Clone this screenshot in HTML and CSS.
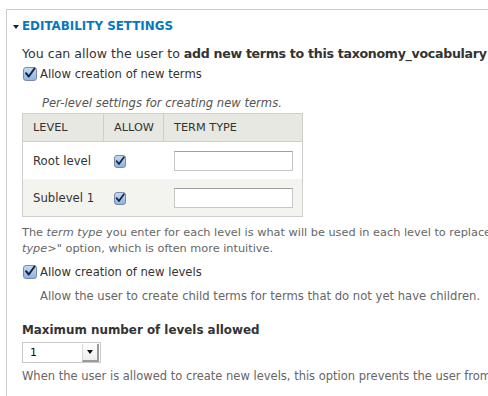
FILE: index.html
```html
<!DOCTYPE html>
<html lang="en">
<head>
  <meta charset="UTF-8">
  <title>Editability settings</title>
  <link rel="stylesheet" href="styles.css">
</head>
<body>
  <div class="fieldset">
    <div class="legend">
      <span class="arrow"></span>
      <span class="legend-text">EDITABILITY SETTINGS</span>
    </div>

    <div class="content">
      <p class="intro">You can allow the user to <strong>add new terms to this taxonomy_vocabulary</strong> using this form.</p>

      <div class="check-row">
        <span class="checkbox"><svg viewBox="0 0 14 14"><path d="M3 7.2 L5.8 10.5 L11.5 2.5" /></svg></span>
        <span>Allow creation of new terms</span>
      </div>

      <div class="caption">Per-level settings for creating new terms.</div>
      <table class="levels">
        <colgroup>
          <col class="col-level">
          <col class="col-allow">
          <col class="col-type">
        </colgroup>
        <thead>
          <tr>
            <th>LEVEL</th>
            <th>ALLOW</th>
            <th>TERM TYPE</th>
          </tr>
        </thead>
        <tbody>
          <tr>
            <td>Root level</td>
            <td><span class="checkbox small"><svg viewBox="0 0 14 14"><path d="M3 7.2 L5.8 10.5 L11.5 2.5" /></svg></span></td>
            <td><span class="text-input"></span></td>
          </tr>
          <tr class="even">
            <td>Sublevel 1</td>
            <td><span class="checkbox small"><svg viewBox="0 0 14 14"><path d="M3 7.2 L5.8 10.5 L11.5 2.5" /></svg></span></td>
            <td><span class="text-input"></span></td>
          </tr>
        </tbody>
      </table>

      <p class="description">The <em>term type</em> you enter for each level is what will be used in each level to replace the "Add &lt;term<br><em>type</em>&gt;" option, which is often more intuitive.</p>

      <div class="check-row">
        <span class="checkbox"><svg viewBox="0 0 14 14"><path d="M3 7.2 L5.8 10.5 L11.5 2.5" /></svg></span>
        <span>Allow creation of new levels</span>
      </div>
      <p class="description indent">Allow the user to create child terms for terms that do not yet have children.</p>

      <label class="field-label">Maximum number of levels allowed</label>
      <div class="select">
        <span class="select-value">1</span>
        <span class="select-button"><span class="select-arrow"></span></span>
      </div>
      <p class="description last">When the user is allowed to create new levels, this option prevents the user from creating too many levels.</p>
    </div>
  </div>
</body>
</html>
```

FILE: styles.css
```css
html, body {
  margin: 0;
  padding: 0;
  background: #fff;
  overflow: hidden;
}

body {
  font-family: "DejaVu Sans", Verdana, sans-serif;
  font-size: 11.7px;
  color: #333;
}

.fieldset {
  margin: 9px 0 0 6px;
  width: 700px;
  height: 400px;
  border-top: 1px solid #ccc;
  border-left: 1px solid #ccc;
}

.legend {
  display: flex;
  align-items: center;
  height: 14px;
  margin-top: 9px;
  padding-left: 6px;
}

.arrow {
  width: 0;
  height: 0;
  border-left: 3px solid transparent;
  border-right: 3px solid transparent;
  border-top: 4px solid #222;
  margin-right: 3px;
  margin-top: 1px;
}

.legend-text {
  color: #0678be;
  font-weight: bold;
  font-size: 11.9px;
  white-space: nowrap;
}

.content {
  padding-left: 15px;
  white-space: nowrap;
}

.intro {
  margin: 13px 0 0;
  font-size: 12.6px;
  line-height: 16px;
}

.intro strong {
  letter-spacing: -0.3px;
}

.check-row {
  display: flex;
  align-items: center;
  height: 16px;
  margin-top: 4px;
  font-size: 11.6px;
}

.checkbox {
  display: inline-block;
  box-sizing: border-box;
  width: 14px;
  height: 14px;
  margin-left: 1px;
  margin-right: 3px;
  border: 1px solid #7a8aa6;
  border-radius: 3px;
  background: linear-gradient(#c4d8f2, #8fb4e4);
}

.checkbox svg {
  display: block;
  width: 14px;
  height: 14px;
  margin: -2px 0 0 -1px;
}

.checkbox path {
  fill: none;
  stroke: #142440;
  stroke-width: 2;
  stroke-linecap: round;
  stroke-linejoin: round;
}

.checkbox.small {
  width: 12px;
  height: 13px;
}

.checkbox.small svg {
  width: 12px;
  height: 12px;
  margin: -1px 0 0 -1px;
}

.caption {
  margin-top: 14px;
  padding-left: 20px;
  font-style: italic;
  color: #555;
  font-size: 11.6px;
  line-height: 15px;
}

.levels {
  margin-top: 2px;
  border-collapse: collapse;
  table-layout: fixed;
  width: 280px;
  border: 1px solid #cfcfc9;
}

.col-level { width: 81px; }
.col-allow { width: 60px; }
.col-type { width: 139px; }

.levels th {
  background: #e8e8e3;
  font-weight: normal;
  text-align: left;
  height: 27px;
  padding: 0 0 0 10px;
  border-bottom: 1px solid #cfcfc9;
  font-size: 11.3px;
}

.levels th + th {
  border-left: 1px solid #cfcfc9;
}

.levels td {
  height: 37px;
  padding: 0 0 0 10px;
  font-size: 11.7px;
}

.levels tr.even td {
  background: #f3f4ef;
}

.levels td .checkbox {
  vertical-align: middle;
  margin-left: 0;
}

.text-input {
  display: block;
  box-sizing: border-box;
  width: 119px;
  height: 20px;
  background: #fff;
  border: 1px solid #c6c6c6;
  border-top-color: #9f9f9f;
}

.description {
  margin: 8px 0 0;
  font-size: 11.3px;
  line-height: 16px;
  color: #666;
}

.check-row + .description.indent {
  margin-top: 8px;
  padding-left: 18px;
  font-size: 11.6px;
}

.description + .check-row {
  margin-top: 7px;
}

.field-label {
  display: block;
  margin-top: 18px;
  font-weight: bold;
  font-size: 11.9px;
  line-height: 16px;
}

.select {
  display: flex;
  box-sizing: border-box;
  width: 79px;
  height: 21px;
  margin-top: 4px;
  border: 1px solid #c9c9c9;
  background: #fff;
}

.select-value {
  flex: 1;
  padding-left: 7px;
  font-size: 11px;
  line-height: 19px;
  color: #111;
}

.select-button {
  display: flex;
  align-items: center;
  justify-content: center;
  width: 14px;
  border-left: 1px solid #d8d8d8;
  border-right: 2px solid #9a9a9a;
  border-bottom: 2px solid #9a9a9a;
  margin: 1px 1px 0 0;
  background: linear-gradient(#fff, #eee);
}

.select-arrow {
  width: 0;
  height: 0;
  border-left: 3px solid transparent;
  border-right: 3px solid transparent;
  border-top: 4px solid #111;
}

.description.last {
  margin-top: 5px;
  font-size: 11.5px;
}
```
